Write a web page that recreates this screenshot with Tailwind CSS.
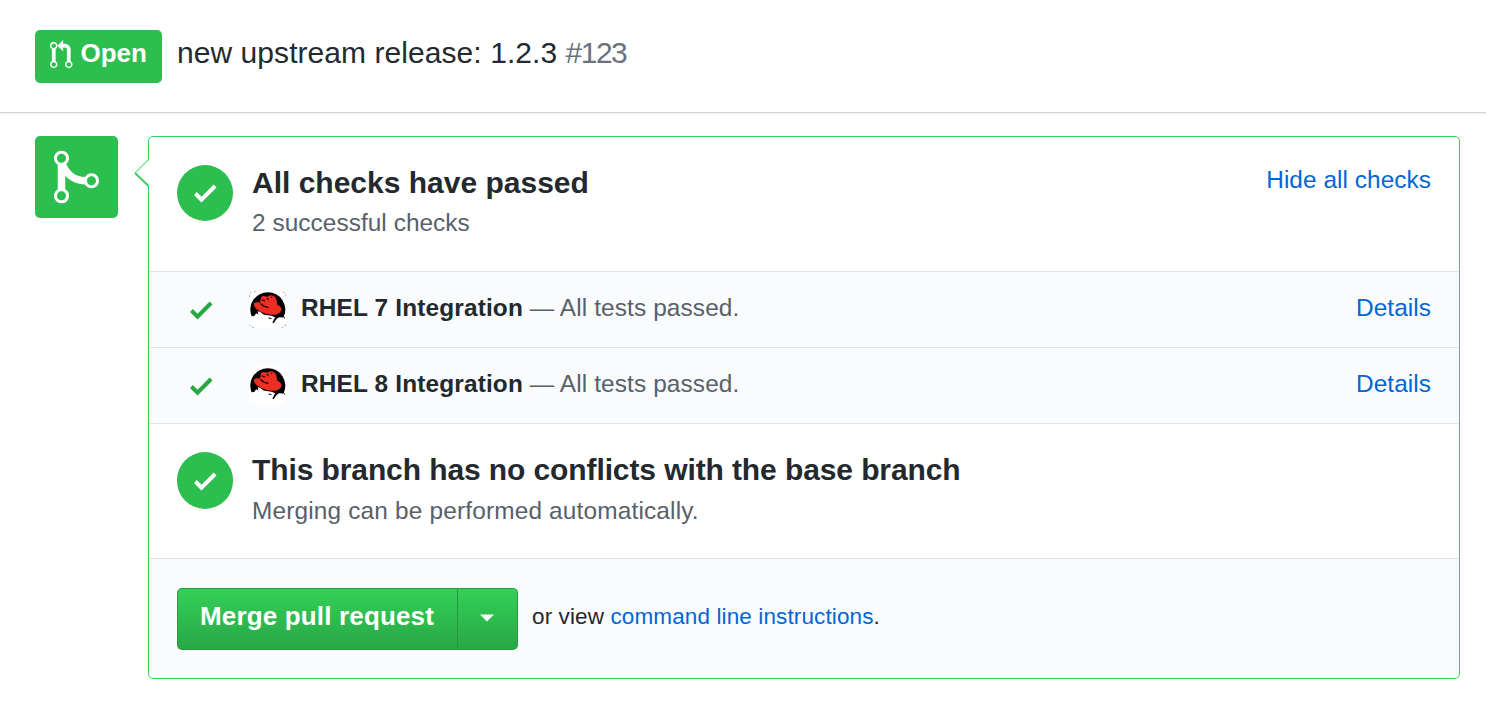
<!DOCTYPE html>
<html lang="en">
<head>
<meta charset="utf-8">
<title>Pull request</title>
<script src="https://cdn.jsdelivr.net/npm/@tailwindcss/browser@4"></script>
</head>
<body class="bg-white font-['Liberation_Sans',Arial,sans-serif] text-[#24292e] w-[1486px] h-[709px] overflow-hidden">
<svg class="hidden">
  <defs>
    <path id="check" d="M12 5l-8 8-4-4 1.5-1.5L4 10l6.5-6.5z"/>
    <g id="hat">
      <rect width="37" height="37" rx="4" fill="#fff"/>
      <path fill="#000" d="M2.6 25.3A17.5 17.5 0 1 1 34.9 25.6L35 26.6L30 26.2L27.3 28.2L24.6 32.2L23.4 31.4L26.2 26.2L22.5 24.8L14.5 23.6L11 20.8L8.6 20.2L9.4 23.6L7.2 22.2L5.2 25Z"/>
      <path fill="#ee2e24" d="M10.9 11.6L12.2 6.2Q13.2 4.6 15.6 5.2L18.5 5.8L21.3 4.2Q26 4.4 27.2 8L28.4 13.8Q33.2 16 32.3 19.4Q29.8 24.4 22.5 23.8Q13 22.4 7.4 18Q3.8 14.4 5.2 12.2Q7.2 10.6 10.9 11.6Z"/>
      <path fill="none" stroke="#1a0000" stroke-width="1.3" d="M11.4 12.4Q14 15.6 19.5 16.4M12.8 8.8L16 10M17.8 7.4L19.5 8.4M22.4 5.8L22.8 7"/>
      <path fill="none" stroke="#000" stroke-width="1" d="M19.5 27L22.5 27.6M35 26.6L36 27"/>
    </g>
  </defs>
</svg>

<header class="h-[113px] border-b border-[#d5d5d6] shadow-[0_1px_2px_rgba(0,0,0,0.08)] flex items-start pt-[30px] pl-[35px]">
  <div class="w-[127px] h-[53px] rounded-[5px] bg-[#2cbe4e] text-white flex items-start pl-[15px] pt-[10px]">
    <svg class="w-[22.5px] h-[30px] shrink-0" viewBox="0 0 12 16" fill="currentColor"><path d="M11 11.28V5c-.03-.78-.34-1.47-.94-2.06C9.46 2.35 8.78 2.03 8 2H7V0L4 3l3 3V4h1c.27.02.48.11.69.31.21.2.3.42.31.69v6.28A1.993 1.993 0 0 0 10 15a1.993 1.993 0 0 0 1-3.72zm-1 2.92c-.66 0-1.2-.55-1.2-1.2 0-.65.55-1.2 1.2-1.2.65 0 1.2.55 1.2 1.2 0 .65-.55 1.2-1.2 1.2zM4 3c0-1.11-.89-2-2-2a1.993 1.993 0 0 0-1 3.72v6.56A1.993 1.993 0 0 0 2 15a1.993 1.993 0 0 0 1-3.72V4.72c.59-.34 1-.98 1-1.72zm-.8 10c0 .66-.55 1.2-1.2 1.2-.65 0-1.2-.55-1.2-1.2 0-.65.55-1.2 1.2-1.2.65 0 1.2.55 1.2 1.2zM2 4.2C1.34 4.2.8 3.65.8 3c0-.65.55-1.2 1.2-1.2.65 0 1.2.55 1.2 1.2 0 .65-.55 1.2-1.2 1.2z"/></svg>
    <span class="ml-[8px] -mt-px text-[26px] leading-[28px] font-bold whitespace-nowrap">Open</span>
  </div>
  <h1 class="ml-[15px] mt-[4px] text-[30px] leading-[38px] whitespace-nowrap"><span class="tracking-[0.06px]">new upstream release: 1.2.3</span> <span class="text-[#6a737d] -tracking-[1.5px]">#123</span></h1>
</header>

<main class="flex items-start pt-[23px] pl-[35px]">
  <div class="w-[83px] h-[82px] rounded-[5px] bg-[#2cbe4e] text-white pt-[11px] pl-[19px]">
    <svg class="w-[45px] h-[60px]" viewBox="0 0 12 16" fill="currentColor" fill-rule="evenodd"><path d="M10 7c-.73 0-1.38.41-1.73 1.02V8C7.22 7.98 6 7.64 5.14 6.98c-.75-.58-1.5-1.61-1.89-2.44A1.993 1.993 0 0 0 2 .99C.89.99 0 1.89 0 3a2 2 0 0 0 1 1.72v6.56c-.59.35-1 .99-1 1.72 0 1.11.89 2 2 2a1.993 1.993 0 0 0 1-3.72V7.67c.67.7 1.44 1.27 2.3 1.69.86.42 2.03.63 2.97.64v-.02c.36.61 1 1.02 1.73 1.02 1.11 0 2-.89 2-2 0-1.11-.89-2-2-2zM3.2 13c0 .66-.55 1.2-1.2 1.2-.65 0-1.2-.55-1.2-1.2 0-.65.55-1.2 1.2-1.2.65 0 1.2.55 1.2 1.2zM2 4.2C1.34 4.2.8 3.65.8 3c0-.65.55-1.2 1.2-1.2.65 0 1.2.55 1.2 1.2 0 .65-.55 1.2-1.2 1.2zm8 6c-.66 0-1.2-.55-1.2-1.2 0-.65.55-1.2 1.2-1.2.65 0 1.2.55 1.2 1.2 0 .65-.55 1.2-1.2 1.2z"/></svg>
  </div>

  <div class="relative ml-[30px] w-[1312px] h-[543px] rounded-[5px] border border-[#34d058]">
    <svg class="absolute -left-[15px] top-[21px] w-[16px] h-[30px]" viewBox="0 0 16 30"><path fill="#fff" d="M16 1L1 15L16 29z"/><path fill="none" stroke="#7fdf95" stroke-width="1.2" d="M14.5 1.5L1 15"/><path fill="none" stroke="#34d058" stroke-width="1.8" d="M1 15L14.5 28"/></svg>

    <section class="flex h-[134px] items-start pt-[28px] pl-[28px] pr-[28px]">
      <div class="w-[56px] h-[56px] rounded-full bg-[#2cbe4e] text-white pl-[17px] pt-[13px]"><svg class="w-[22.5px] h-[30px]" viewBox="0 0 12 16" fill="currentColor"><use href="#check"/></svg></div>
      <div class="ml-[19px] grow whitespace-nowrap">
        <h2 class="text-[30px] leading-[36px] font-bold">All checks have passed</h2>
        <p class="mt-[7px] text-[24.4px] leading-[30px] tracking-[0.05px] text-[#586069]">2 successful checks</p>
      </div>
      <a class="text-[24.4px] leading-[30px] tracking-[0.05px] text-[#0366d6] whitespace-nowrap">Hide all checks</a>
    </section>

    <div class="flex h-[76px] items-start border-t border-[#e1e4e8] bg-[#fafbfc] pl-[41px] pr-[28px] pt-[19px]">
      <svg class="mt-[3.5px] w-[22.5px] h-[30px] text-[#28a745]" viewBox="0 0 12 16" fill="currentColor"><use href="#check"/></svg>
      <svg class="ml-[36.5px] w-[37px] h-[37px]" viewBox="0 0 37 37"><use href="#hat"/><rect x=".5" y=".5" width="36" height="36" rx="4" fill="none" stroke="#999" stroke-width="1" stroke-dasharray="2 1.5 1.5 28" stroke-dashoffset="3"/></svg>
      <p class="ml-[15px] grow text-[24.4px] leading-[34px] text-[#586069] whitespace-nowrap"><b class="text-[#24292e] tracking-[0.16px]">RHEL 7 Integration</b> <span class="tracking-[0.12px]">— All tests passed.</span></p>
      <a class="text-[24.4px] leading-[34px] tracking-[0.05px] text-[#0366d6]">Details</a>
    </div>
    <div class="flex h-[76px] items-start border-t border-[#e1e4e8] bg-[#fafbfc] pl-[41px] pr-[28px] pt-[19px]">
      <svg class="mt-[3.5px] w-[22.5px] h-[30px] text-[#28a745]" viewBox="0 0 12 16" fill="currentColor"><use href="#check"/></svg>
      <svg class="ml-[36.5px] w-[37px] h-[37px]" viewBox="0 0 37 37"><use href="#hat"/></svg>
      <p class="ml-[15px] grow text-[24.4px] leading-[34px] text-[#586069] whitespace-nowrap"><b class="text-[#24292e] tracking-[0.16px]">RHEL 8 Integration</b> <span class="tracking-[0.12px]">— All tests passed.</span></p>
      <a class="text-[24.4px] leading-[34px] tracking-[0.05px] text-[#0366d6]">Details</a>
    </div>

    <section class="flex h-[135px] items-start border-t border-[#e1e4e8] pt-[28px] pl-[28px]">
      <div class="w-[56px] h-[57px] rounded-full bg-[#2cbe4e] text-white pl-[17px] pt-[13.5px]"><svg class="w-[22.5px] h-[30px]" viewBox="0 0 12 16" fill="currentColor"><use href="#check"/></svg></div>
      <div class="ml-[19px] whitespace-nowrap">
        <h2 class="text-[30px] leading-[36px] -tracking-[0.1px] font-bold">This branch has no conflicts with the base branch</h2>
        <p class="mt-[8px] text-[24.4px] leading-[30px] tracking-[0.17px] text-[#586069]">Merging can be performed automatically.</p>
      </div>
    </section>

    <footer class="flex h-[120px] items-start rounded-b-[5px] border-t border-[#e1e4e8] bg-[#fafbfc] pt-[29px] pl-[28px]">
      <div class="flex w-[341px] h-[62px] rounded-[5px] border border-[#289a41] border-b-[#249a3d] bg-linear-to-b from-[#34d058] to-[#28a745] text-white overflow-hidden">
        <button class="w-[280px] border-r border-[#26973f] pl-[22px] pb-[6px] text-left text-[26px] leading-[54px] tracking-[0.16px] font-bold whitespace-nowrap">Merge pull request</button>
        <button class="flex grow justify-center pt-[25px] pr-[2px]"><svg class="w-[14px] h-[8px]" viewBox="0 0 14 8" fill="currentColor"><path d="M0 0.5h14L7 7.5z"/></svg></button>
      </div>
      <p class="ml-[14px] mt-px text-[22.5px] leading-[56px] tracking-[0.12px] whitespace-nowrap">or view <a class="text-[#0366d6]">command line instructions</a>.</p>
    </footer>
  </div>
</main>
</body>
</html>
